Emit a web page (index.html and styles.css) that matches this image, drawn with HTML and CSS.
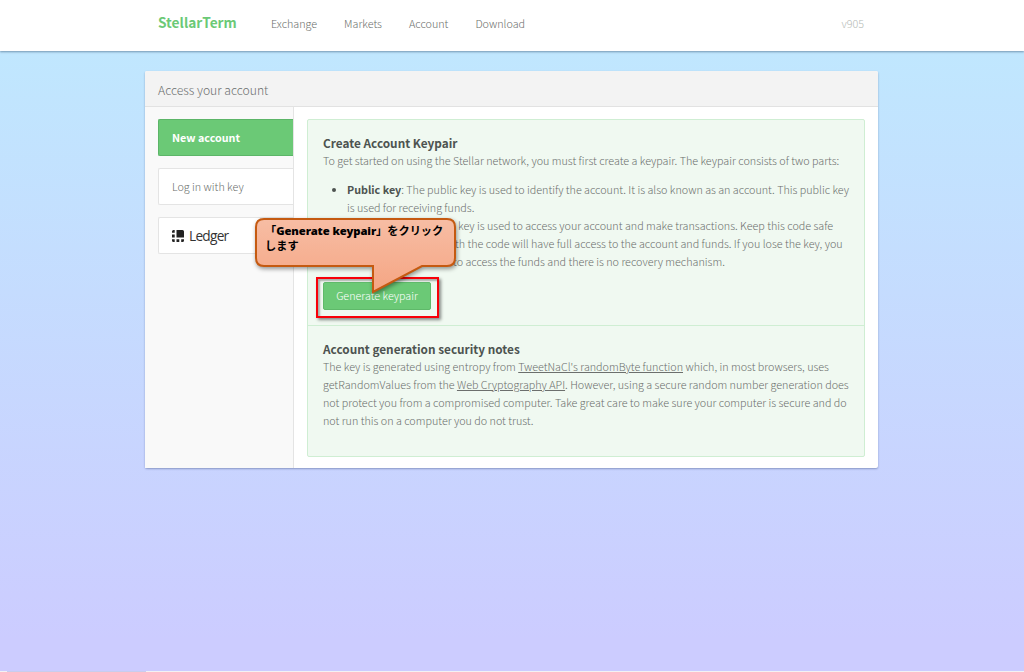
FILE: index.html
```html
<!DOCTYPE html>
<html lang="en">
<head>
<meta charset="utf-8">
<title>StellarTerm</title>
<link rel="stylesheet" href="styles.css">
</head>
<body>
<header class="header">
  <div class="header-inner">
    <a class="logo">StellarTerm</a>
    <nav class="nav"><a>Exchange</a><a>Markets</a><a>Account</a><a>Download</a></nav>
    <span class="version">v905</span>
  </div>
</header>
<main class="island">
  <h1 class="island-header">Access your account</h1>
  <div class="island-body">
    <aside class="tabs">
      <a class="tab tab-active">New account</a>
      <a class="tab">Log in with key</a>
      <a class="tab tab-ledger">
        <svg class="ledger-icon" width="12" height="12" viewBox="0 0 12 12" fill="#222"><path d="M4.500 0h6q1.500 0 1.500 1.500V7.500H4.500zM0 4.600h2.700v2.900H0zM0 2.800V1.500Q0 0 1.500 0H2.700v2.800zM0 9.300h2.700V12H1.500Q0 12 0 10.500zM4.500 9.300h2.800V12H4.500zM9.200 9.300H12v1.200Q12 12 10.500 12H9.200z"/></svg>
        <span class="ledger-name">Ledger</span>
      </a>
    </aside>
    <section class="content">
      <div class="panel">
        <div class="panel-section create">
          <h2>Create Account Keypair</h2>
          <p>To get started on using the Stellar network, you must first create a keypair. The keypair consists of two parts:</p>
          <ul>
            <li><strong>Public key</strong>: The public key is used to identify the account. It is also known as an account. This public key<br>is used for receiving funds.</li>
            <li class="secret"><span class="line-key">key is used to access your account and make transactions. Keep this code safe</span><br><span class="line-code">th the code will have full access to the account and funds. If you lose the key, you</span><br><span class="line-funds">to access the funds and there is no recovery mechanism.</span></li>
          </ul>
          <div class="highlight"><button class="button">Generate keypair</button></div>
        </div>
        <div class="panel-section notes">
          <h2>Account generation security notes</h2>
          <p>The key is generated using entropy from <a>TweetNaCl's randomByte function</a> which, in most browsers, uses<br>getRandomValues from the <a>Web Cryptography API</a>. However, using a secure random number generation does<br>not protect you from a compromised computer. Take great care to make sure your computer is secure and do<br>not run this on a computer you do not trust.</p>
        </div>
      </div>
    </section>
  </div>
</main>
<div class="bottom-edge"><span class="bottom-status"></span></div>
<div class="callout">
  <svg class="callout-shape" width="216" height="90" viewBox="0 0 216 90">
    <defs><linearGradient id="peach" x1="0" y1="0" x2="0" y2="1"><stop offset="0" stop-color="#f7bda4"/><stop offset="1" stop-color="#f5a583"/></linearGradient></defs>
    <path d="M9 3H192Q200 3 200 11V42Q200 50 192 50H167L118 76V50H9Q1 50 1 42V11Q1 3 9 3Z" fill="url(#peach)" stroke="#c55a11" stroke-width="2"/>
  </svg>
  <div class="callout-text" lang="ja">「<b>Generate keypair</b>」をクリック<br>します</div>
</div>
</body>
</html>
```
FILE: styles.css
```css
* { box-sizing: border-box; }
body {
  display: flex;
  flex-direction: column;
  margin: 0;
  height: 672px;
  overflow: hidden;
  color: #6c6f6d;
  font: 300 10.75px/18px "Noto Sans CJK JP", "Noto Sans", sans-serif;
  background: linear-gradient(#c0e7fe 51px, #ccccff 640px);
}
.header { flex: none; height: 51px; background: #fff; box-shadow: 0 1px 2px rgba(40, 70, 100, .5); }
.header-inner { display: flex; align-items: center; width: 706px; height: 47px; margin-left: 158px; }
.logo { width: 113px; color: #6bc976; font-size: 13.7px; font-weight: 700; line-height: 44px; padding-bottom: 3px; }
.nav { display: flex; gap: 27px; }
.version { margin-left: auto; color: #b4bab5; font-size: 10.75px; }
.island {
  flex: none;
  width: 733px;
  height: 397px;
  margin: 20px 0 0 145px;
  background: #fff;
  border-radius: 2px;
  box-shadow: 0 1px 2px rgba(40, 60, 110, .4);
}
.island-header {
  height: 36px;
  margin: 0;
  padding-left: 13px;
  background: #f3f3f3;
  border-bottom: 1px solid #e2e2e2;
  border-radius: 2px 2px 0 0;
  color: #6d7070;
  font-size: 12.15px;
  font-weight: 300;
  line-height: 37px;
}
.island-body { display: flex; height: 361px; }
.tabs {
  display: flex;
  flex-direction: column;
  gap: 12px;
  width: 149px;
  padding: 12px 0 0 13px;
  background: #f9f9f9;
  border-right: 1px solid #e4e4e4;
}
.tab {
  display: flex;
  align-items: center;
  height: 37px;
  padding-left: 13px;
  background: #fff;
  border: 1px solid #e4e4e4;
  border-right: 0;
  border-radius: 2px 0 0 2px;
}
.tab-active { background: #6bc976; border-color: #5cb568; color: #fff; font-weight: 700; }
.ledger-icon { margin-right: 5px; }
.ledger-name { color: #333; font: 13.7px/18px "Open Sans", sans-serif; letter-spacing: -.75px; }
.content { padding: 12px 13px; }
.panel { width: 558px; height: 338px; background: #f0f9f1; border: 1px solid #cfeed3; border-radius: 2px; white-space: nowrap; }
.panel-section { padding: 14px 15px; }
.create { height: 206px; border-bottom: 1px solid #cfeed3; }
.panel h2 { margin: 0; color: #4d5350; font-size: 11.8px; font-weight: 600; line-height: 18px; }
.panel p { margin: 0; }
.panel ul { margin: 11px 0 6px; padding-left: 24px; }
.panel li::marker { color: #4d5350; }
.panel strong { color: #4d5350; font-weight: 700; }
.panel a { text-decoration: underline; }
.secret { list-style: none; }
.line-key { margin-left: 111px; }
.line-code { margin-left: 108px; }
.line-funds { margin-left: 106px; }
.highlight {
  width: 123px;
  height: 41px;
  margin-left: -7px;
  padding: 3px 5px;
  border: 2px solid #f80008;
  box-shadow: 2px 2px 3px rgba(0, 0, 0, .45), inset 2px 2px 2px rgba(0, 0, 0, .3);
}
.button {
  display: block;
  width: 108px;
  height: 28px;
  padding: 0;
  background: #6bc976;
  border: 1px solid #5fb96a;
  border-radius: 2px;
  color: #fff;
  font: inherit;
}
.bottom-edge { height: 1px; margin: auto 0 0; padding-left: 7px; background: #f2f2f4; }
.bottom-status { display: block; width: 139px; height: 1px; background: #c9cdec; }
.callout { position: absolute; left: 255px; top: 216px; }
.callout-shape { display: block; filter: drop-shadow(1px 2px 2px rgba(0, 0, 0, .4)); }
.callout-text { position: absolute; left: 10px; top: 7px; color: #000; font: 700 11.2px/14px "Noto Sans CJK JP", sans-serif; white-space: nowrap; }
.callout-text b { font-family: "Noto Sans", sans-serif; font-size: 11.3px; letter-spacing: -.1px; }
```
